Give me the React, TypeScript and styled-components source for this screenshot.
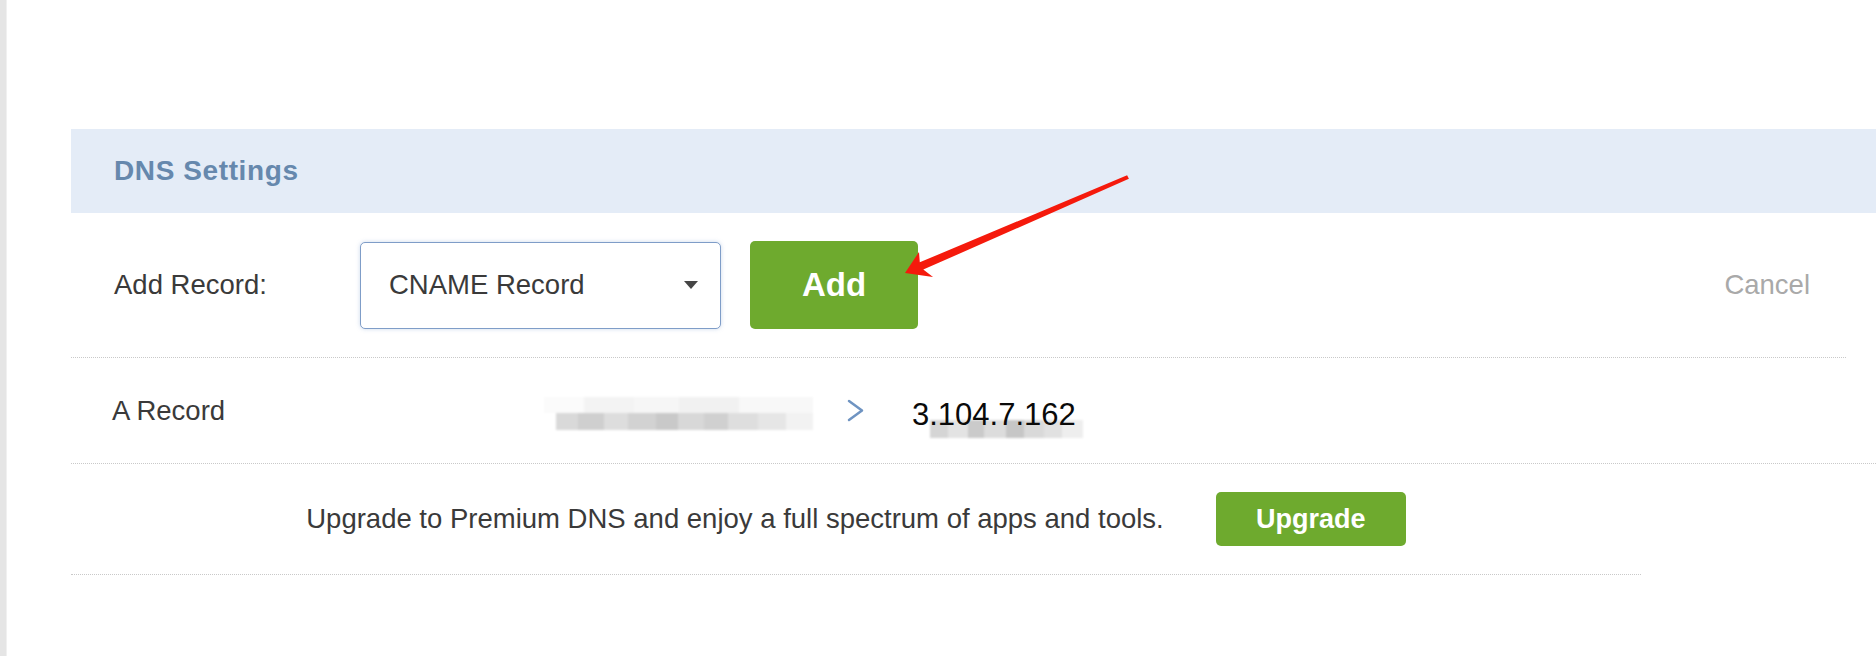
import React from "react";
import styled, { createGlobalStyle } from "styled-components";

const GlobalStyle = createGlobalStyle`
  * { box-sizing: border-box; }
  html, body { margin: 0; padding: 0; background: #ffffff; }
  body { font-family: "Liberation Sans", Arial, Helvetica, sans-serif; }
`;

const Page = styled.div`
  position: relative;
  display: flex;
  width: 1876px;
  min-height: 656px;
  overflow: hidden;
  background: #ffffff;
`;

const LeftStrip = styled.div`
  width: 7px;
  flex-shrink: 0;
  background: #e5e5e5;
  border-right: 1px solid #f0f0f0;
`;

const Main = styled.div`
  flex: 1;
  min-width: 0;
  display: flex;
  flex-direction: column;
  padding: 129px 0 0 64px;
`;

const Header = styled.div`
  height: 84px;
  display: flex;
  align-items: center;
  padding-left: 43px;
  background: #e4ecf7;
`;

const Title = styled.h2`
  margin: 0;
  font-size: 28px;
  font-weight: 700;
  letter-spacing: 0.6px;
  color: #6688ad;
`;

const Row = styled.div<{ $width?: number; $height: number }>`
  width: ${(p) => (p.$width ? `${p.$width}px` : "auto")};
  height: ${(p) => p.$height}px;
  display: flex;
  align-items: center;
  border-bottom: 1px dotted #c9c9c9;
`;

const AddRow = styled(Row)`
  padding: 0 36px 0 43px;
`;

const RecordRow = styled(Row)`
  padding-left: 41px;
`;

const UpgradeRow = styled(Row)`
  justify-content: center;
  gap: 52px;
`;

const Label = styled.span<{ $width: number }>`
  width: ${(p) => p.$width}px;
  flex-shrink: 0;
  font-size: 27.5px;
  color: #3a3a3a;
`;

const Select = styled.div`
  width: 361px;
  height: 87px;
  flex-shrink: 0;
  display: flex;
  align-items: center;
  justify-content: space-between;
  padding: 0 22px 0 28px;
  border: 1px solid #7f9dc8;
  border-radius: 5px;
  box-shadow: 0 0 4px rgba(110, 145, 200, 0.35);
  background: #ffffff;
  font-size: 27.5px;
  color: #3a3a3a;
`;

const Caret = styled.span`
  width: 0;
  height: 0;
  border-left: 7px solid transparent;
  border-right: 7px solid transparent;
  border-top: 8px solid #454545;
`;

const GreenButton = styled.button<{ $w: number; $h: number; $size: number }>`
  width: ${(p) => p.$w}px;
  height: ${(p) => p.$h}px;
  flex-shrink: 0;
  border: none;
  border-radius: 5px;
  background: #6eaa2e;
  color: #ffffff;
  font-family: "Liberation Sans", Arial, sans-serif;
  font-weight: 700;
  font-size: ${(p) => p.$size}px;
  padding: 0;
  cursor: pointer;
`;

const AddButton = styled(GreenButton)`
  margin-left: 29px;
`;

const Cancel = styled.span`
  margin-left: auto;
  font-size: 27.5px;
  color: #a9a9a9;
`;

const Redaction = styled.div`
  width: 269px;
  height: 33px;
  margin-top: 6px;
  display: flex;
  flex-direction: column;
  filter: blur(1.2px);
`;

const MosaicLine = styled.div<{ $h: number }>`
  height: ${(p) => p.$h}px;
  display: flex;
`;

const Cell = styled.div<{ $shade: string; $w: number }>`
  width: ${(p) => p.$w}px;
  height: 100%;
  background: ${(p) => p.$shade};
`;

const Chevron = styled.svg`
  margin-left: 33px;
  width: 19px;
  height: 23px;
  flex-shrink: 0;
`;

const IpWrap = styled.div`
  position: relative;
  margin-left: 47px;
  margin-top: 7px;
`;

const IpText = styled.span`
  position: relative;
  z-index: 1;
  display: block;
  font-size: 31px;
  line-height: 1;
  color: #0a0a0a;
`;

const IpMask = styled.div`
  position: absolute;
  left: 18px;
  top: 21px;
  width: 153px;
  height: 18px;
  display: flex;
  filter: blur(0.8px);
`;

const UpgradeText = styled.span`
  font-size: 27.5px;
  color: #3a3a3a;
`;

const Arrow = styled.svg`
  position: absolute;
  left: 895px;
  top: 170px;
  width: 240px;
  height: 115px;
  pointer-events: none;
`;

const topCells = [
  ["#fbfbfb", 40], ["#f3f3f3", 50], ["#f6f6f6", 45], ["#f1f1f1", 60], ["#f8f8f8", 74],
] as const;
const bottomCells = [
  ["#ffffff", 12], ["#d9d9d9", 22], ["#cfcfcf", 26], ["#dddddd", 24], ["#d2d2d2", 28],
  ["#c9c9c9", 22], ["#d8d8d8", 26], ["#d0d0d0", 24], ["#dedede", 30], ["#e6e6e6", 28], ["#f2f2f2", 27],
] as const;
const ipCells = [
  ["#d5d5d5", 18], ["#e3e3e3", 20], ["#cacaca", 16], ["#dcdcdc", 22], ["#c6c6c6", 18],
  ["#d9d9d9", 20], ["#e1e1e1", 18], ["#eeeeee", 21],
] as const;

export default function App() {
  return (
    <>
      <GlobalStyle />
      <Page>
        <LeftStrip />
        <Main>
          <Header>
            <Title>DNS Settings</Title>
          </Header>
          <AddRow $width={1775} $height={145}>
            <Label $width={246}>Add Record:</Label>
            <Select>
              <span>CNAME Record</span>
              <Caret />
            </Select>
            <AddButton $w={168} $h={88} $size={33}>
              Add
            </AddButton>
            <Cancel>Cancel</Cancel>
          </AddRow>
          <RecordRow $height={106}>
            <Label $width={432}>A Record</Label>
            <Redaction>
              <MosaicLine $h={16}>
                {topCells.map(([c, w], i) => (
                  <Cell key={i} $shade={c} $w={w} />
                ))}
              </MosaicLine>
              <MosaicLine $h={17}>
                {bottomCells.map(([c, w], i) => (
                  <Cell key={i} $shade={c} $w={w} />
                ))}
              </MosaicLine>
            </Redaction>
            <Chevron viewBox="0 0 19 23">
              <polyline
                points="3,2 16,11.5 3,21"
                fill="none"
                stroke="#6f94c2"
                strokeWidth="2.5"
                strokeLinecap="round"
                strokeLinejoin="round"
              />
            </Chevron>
            <IpWrap>
              <IpText>3.104.7.162</IpText>
              <IpMask>
                {ipCells.map(([c, w], i) => (
                  <Cell key={i} $shade={c} $w={w} />
                ))}
              </IpMask>
            </IpWrap>
          </RecordRow>
          <UpgradeRow $width={1570} $height={111}>
            <UpgradeText>
              Upgrade to Premium DNS and enjoy a full spectrum of apps and tools.
            </UpgradeText>
            <GreenButton $w={190} $h={54} $size={27}>
              Upgrade
            </GreenButton>
          </UpgradeRow>
        </Main>
        <Arrow viewBox="895 170 240 115">
          <polygon
            points="1127.1,175.2 919.8,262.3 919,252 905,273 933,277 923.3,269.6 1128.9,178.8"
            fill="#f51a0c"
          />
        </Arrow>
      </Page>
    </>
  );
}
